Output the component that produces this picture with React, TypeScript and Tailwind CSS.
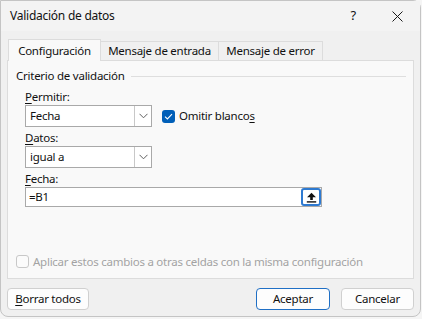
import type { ReactNode } from 'react'

// ── Small pieces ──────────────────────────────

function Chevron(): ReactNode {
  return (
    <svg width="9" height="6" viewBox="0 0 9 6" fill="none">
      <path d="M0.5 0.8 L4.5 4.8 L8.5 0.8" stroke="#606060" strokeWidth="1" />
    </svg>
  )
}

function Select({ value }: { value: string }): ReactNode {
  return (
    <div className="flex h-[22px] w-[127px] border border-[#a9a9a9] bg-white">
      <span className="flex-1 pl-[4px] leading-[20px]">{value}</span>
      <span className="flex w-[17px] items-center justify-center border-l border-[#c8c8c8]">
        <Chevron />
      </span>
    </div>
  )
}

function U({ children }: { children: ReactNode }): ReactNode {
  return <span className="underline underline-offset-[2px]">{children}</span>
}

// ── Main export ───────────────────────────────

export default function App(): ReactNode {
  return (
    <div className="h-[319px] w-[422px] overflow-hidden bg-[#f5f5f5] text-[11.5px] tracking-[-0.25px] text-[#111] [font-family:'Noto_Sans',sans-serif]">
      <div className="flex h-[317px] w-[421px] flex-col rounded-r-[8px] rounded-bl-[8px] border border-[#c4c4c4] bg-[#f0f0f0]">
        {/* title bar */}
        <div className="flex h-[30px] items-center bg-[#f3f3f3] pl-[9px]">
          <span className="flex-1 text-[12px]">Validación de datos</span>
          <span className="mr-[36px] text-[13px]">?</span>
          <svg width="11" height="11" viewBox="0 0 11 11" className="mr-[17px]">
            <path d="M0.5 0.5 L10.5 10.5 M10.5 0.5 L0.5 10.5" stroke="#1a1a1a" strokeWidth="1" />
          </svg>
        </div>

        {/* tabs */}
        <div className="mt-[8px] flex h-[21px] items-end pl-[7px]">
          <div className="relative z-10 -mb-px flex h-[22px] w-[93px] items-center justify-center border border-b-0 border-[#dcdcdc] bg-[#f9f9f9]">
            Configuración
          </div>
          <div className="flex h-[19px] w-[118px] items-center justify-center border border-b-0 border-l-0 border-[#dcdcdc] bg-[#f0f0f0]">
            Mensaje de entrada
          </div>
          <div className="flex h-[19px] w-[104px] items-center justify-center border border-b-0 border-l-0 border-[#dcdcdc] bg-[#f0f0f0]">
            Mensaje de error
          </div>
        </div>

        {/* panel */}
        <div className="mx-[6px] flex h-[219px] flex-col border border-[#dcdcdc] bg-[#f9f9f9] pl-[8px]">
          <div className="mt-[7px] flex items-center">
            <span className="leading-[16px]">Criterio de validación</span>
            <span className="ml-[6px] mr-[7px] h-px flex-1 bg-[#dedede]" />
          </div>

          <div className="ml-[9px] flex flex-col">
            <span className="mt-[5px] leading-[16px]">
              <U>P</U>ermitir:
            </span>
            <div className="flex items-center">
              <Select value="Fecha" />
              <span className="ml-[10px] flex h-[13px] w-[13px] items-center justify-center rounded-[3px] bg-[#005fb8]">
                <svg width="9" height="7" viewBox="0 0 9 7" fill="none">
                  <path d="M1 3.6 L3.4 6 L8 1.2" stroke="white" strokeWidth="1.1" />
                </svg>
              </span>
              <span className="ml-[4px]">
                Omitir blanco<U>s</U>
              </span>
            </div>

            <span className="mt-[3px] leading-[16px]">
              <U>D</U>atos:
            </span>
            <Select value="igual a" />

            <span className="mt-[3px] leading-[16px]">
              <U>F</U>echa:
            </span>
            <div className="flex h-[20px] w-[297px] items-center border border-[#a9a9a9] bg-white pl-[3px]">
              <span className="flex-1 leading-[18px]">=B1</span>
              <span className="flex h-[18px] w-[20px] items-center justify-center rounded-[3px] border-2 border-[#2e7ad1] bg-white">
                <svg width="11" height="11" viewBox="0 0 11 11">
                  <path d="M5.5 0.8 L10 5.3 L6.8 5.3 L6.8 8 L4.2 8 L4.2 5.3 L1 5.3 Z" fill="#111" />
                  <rect x="0.8" y="9.2" width="9.4" height="1.4" fill="#111" />
                </svg>
              </span>
            </div>
          </div>

          <div className="mt-auto mb-[8px] flex items-center">
            <span className="h-[13px] w-[13px] rounded-[3px] border border-[#c8c8c8] bg-[#fbfbfb]" />
            <span className="ml-[4px] text-[#a3a3a3]">Aplicar estos cambios a otras celdas con la misma configuración</span>
          </div>
        </div>

        {/* buttons */}
        <div className="mt-[9px] flex px-[6px]">
          <button type="button" className="h-[22px] w-[82px] rounded-[4px] border border-[#d0d0d0] bg-[#fdfdfd]">
            <U>B</U>orrar todos
          </button>
          <span className="flex-1" />
          <button type="button" className="h-[22px] w-[74px] rounded-[4px] border border-[#1f6fc5] bg-[#fdfdfd]">
            Aceptar
          </button>
          <button type="button" className="ml-[11px] h-[22px] w-[73px] rounded-[4px] border border-[#d0d0d0] bg-[#fdfdfd]">
            Cancelar
          </button>
        </div>
      </div>
    </div>
  )
}
